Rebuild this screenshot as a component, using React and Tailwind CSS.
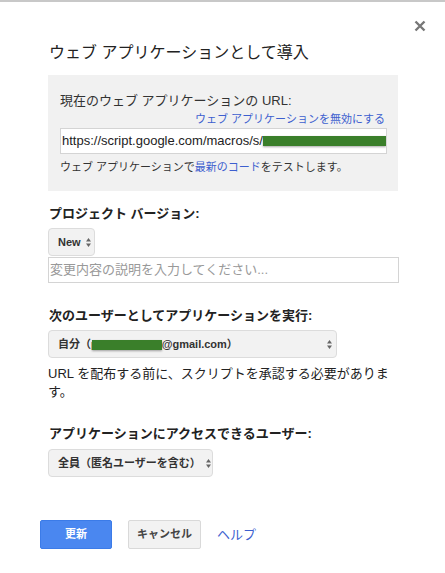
import React from "react";

const FONT = { fontFamily: '"Liberation Sans", "Noto Sans CJK JP", sans-serif' };

function Arrows() {
  return (
    <svg width="5" height="9" viewBox="0 0 5 9" className="shrink-0">
      <path d="M2.5 0 L5 3.5 L0 3.5 Z" fill="#666" />
      <path d="M2.5 9 L5 5.5 L0 5.5 Z" fill="#666" />
    </svg>
  );
}

function Redact({ width }) {
  return (
    <span
      className={`inline-block h-[10px] bg-[#3a7f2a] shadow-[0_1px_2px_rgba(0,0,0,0.35)] align-middle ${width}`}
    />
  );
}

function Select({ children, width }) {
  return (
    <div
      className={`h-[28px] ${width} flex items-center justify-between gap-[5px] pl-[9px] pr-[4px] bg-[#f2f2f2] border border-[#dcdcdc] rounded-[4px] text-[11px] font-bold text-[#333]`}
    >
      <span className="flex items-center whitespace-nowrap">{children}</span>
      <Arrows />
    </div>
  );
}

export default function App() {
  return (
    <div
      className="w-[445px] h-[573px] bg-white border-t-2 border-[#c8c8c8] pt-[18px]"
      style={FONT}
    >
      <div className="flex justify-end pr-[19px] h-[12px]">
        <svg width="12" height="12" viewBox="0 0 12 12">
          <path d="M1.5 1.5 L10.5 10.5 M10.5 1.5 L1.5 10.5" stroke="#777" strokeWidth="2.4" />
        </svg>
      </div>

      <div className="mt-[9px] ml-[49px] text-[16px] leading-[24px] text-[#222]">
        ウェブ アプリケーションとして導入
      </div>

      <div className="ml-[48px] mt-[10px] w-[350px] bg-[#f1f1f1] pl-[12px] pr-[11px] pt-[16px] pb-[16px]">
        <div className="text-[13px] leading-[20px] text-[#333]">
          現在のウェブ アプリケーションの URL:
        </div>
        <div className="text-right pr-[2px] text-[11px] leading-[16px] text-[#3d5fcf]">
          ウェブ アプリケーションを無効にする
        </div>
        <div className="mt-[1px] h-[26px] bg-white border border-[#d4d4d4] flex items-center pl-[1px] overflow-hidden whitespace-nowrap text-[13px] text-[#222]">
          <span>https://script.google.com/macros/s/</span>
          <Redact width="w-[130px]" />
        </div>
        <div className="mt-[5px] text-[11px] leading-[16px] text-[#333]">
          ウェブ アプリケーションで<span className="text-[#3d5fcf]">最新のコード</span>をテストします。
        </div>
      </div>

      <div className="ml-[48px] w-[351px]">
        <div className="mt-[13px] ml-[1px] text-[13px] leading-[20px] font-bold text-[#222]">
          プロジェクト バージョン:
        </div>
        <div className="mt-[4px]">
          <Select width="w-[47px]">New</Select>
        </div>
        <div className="mt-[1px] h-[26px] border border-[#d4d4d4] flex items-center pl-[1px] text-[13px] text-[#999]">
          変更内容の説明を入力してください...
        </div>

        <div className="mt-[23px] ml-[1px] text-[13px] leading-[20px] font-bold text-[#222]">
          次のユーザーとしてアプリケーションを実行:
        </div>
        <div className="mt-[4px]">
          <Select width="w-[289px]">
            自分（p
            <span className="ml-[-6px]">
              <Redact width="w-[70px]" />
            </span>
            @gmail.com）
          </Select>
        </div>
        <div className="mt-[7px] text-[13px] leading-[18px] text-[#222]">
          URL を配布する前に、スクリプトを承認する必要があります。
        </div>

        <div className="mt-[23px] ml-[1px] text-[13px] leading-[20px] font-bold text-[#222]">
          アプリケーションにアクセスできるユーザー:
        </div>
        <div className="mt-[5px]">
          <Select width="w-[165px]">全員（匿名ユーザーを含む）</Select>
        </div>
      </div>

      <div className="mt-[43px] ml-[40px] flex items-center">
        <button className="h-[29px] w-[72px] rounded-[2px] border border-[#3b7be8] bg-[#4a87f0] text-white text-[11px] font-bold">
          更新
        </button>
        <button className="ml-[16px] h-[29px] w-[73px] rounded-[2px] border border-[#d9d9d9] bg-[#f2f2f2] text-[#444] text-[11px] font-bold">
          キャンセル
        </button>
        <span className="ml-[16px] text-[13px] text-[#3d5fcf]">ヘルプ</span>
      </div>
    </div>
  );
}
